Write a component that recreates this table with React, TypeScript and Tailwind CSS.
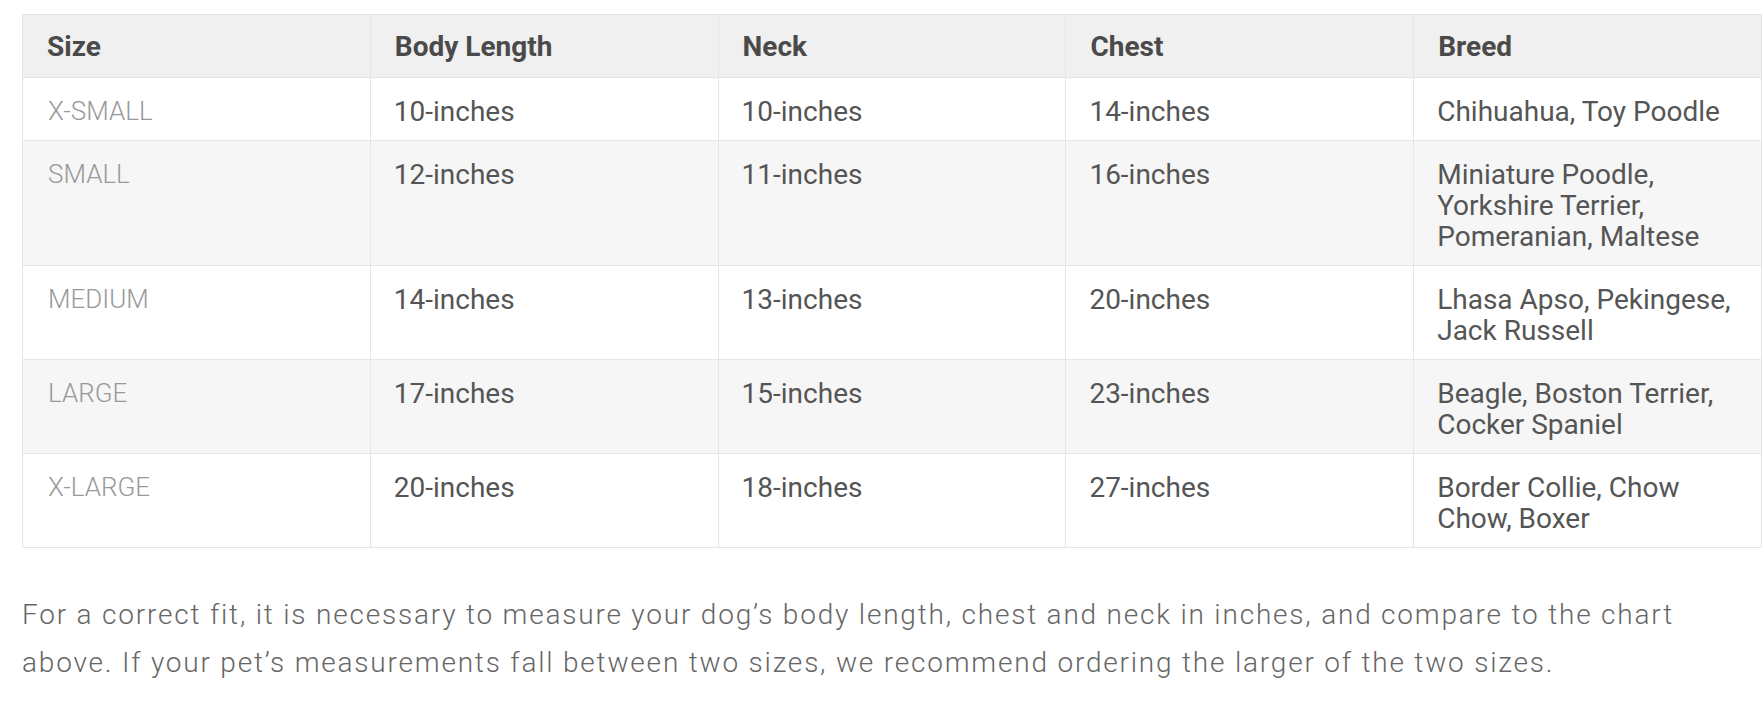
const rows = [
  { size: "X-SMALL", body: "10-inches", neck: "10-inches", chest: "14-inches", breed: "Chihuahua, Toy Poodle" },
  { size: "SMALL", body: "12-inches", neck: "11-inches", chest: "16-inches", breed: "Miniature Poodle, Yorkshire Terrier, Pomeranian, Maltese" },
  { size: "MEDIUM", body: "14-inches", neck: "13-inches", chest: "20-inches", breed: "Lhasa Apso, Pekingese, Jack Russell" },
  { size: "LARGE", body: "17-inches", neck: "15-inches", chest: "23-inches", breed: "Beagle, Boston Terrier, Cocker Spaniel" },
  { size: "X-LARGE", body: "20-inches", neck: "18-inches", chest: "27-inches", breed: "Border Collie, Chow Chow, Boxer" },
];

const headers = ["Size", "Body Length", "Neck", "Chest", "Breed"];

export default function App() {
  return (
    <div className="min-h-screen bg-white pl-[22px] pt-[14px] font-['Roboto',_'Liberation_Sans',_sans-serif]">
      <table className="w-[1740px] table-fixed border-collapse border border-[#e6e6e6]">
        <thead>
          <tr className="bg-[#f0f0f0]">
            {headers.map((h) => (
              <th
                key={h}
                className="w-1/5 border border-[#e6e6e6] px-[24px] pt-[17px] pb-[15px] text-left align-top text-[28px] font-bold leading-[30px] text-[#4a4a4a]"
              >
                {h}
              </th>
            ))}
          </tr>
        </thead>
        <tbody>
          {rows.map((r, i) => (
            <tr key={r.size} className={i % 2 === 1 ? "bg-[#f6f6f6]" : "bg-white"}>
              <td className="border border-[#e6e6e6] px-[25px] pt-[18px] pb-[13px] align-top text-[26px] font-light leading-[31px] text-[#999999]">
                {r.size}
              </td>
              <td className="border border-[#e6e6e6] px-[23px] pt-[18px] pb-[13px] align-top text-[28px] leading-[31px] text-[#555555]">
                {r.body}
              </td>
              <td className="border border-[#e6e6e6] px-[23px] pt-[18px] pb-[13px] align-top text-[28px] leading-[31px] text-[#555555]">
                {r.neck}
              </td>
              <td className="border border-[#e6e6e6] px-[23px] pt-[18px] pb-[13px] align-top text-[28px] leading-[31px] text-[#555555]">
                {r.chest}
              </td>
              <td className="border border-[#e6e6e6] px-[23px] pt-[18px] pb-[13px] align-top text-[28px] leading-[31px] text-[#555555]">
                {r.breed}
              </td>
            </tr>
          ))}
        </tbody>
      </table>
      <p className="mt-[43px] w-[1700px] text-[28px] font-light leading-[48px] tracking-[1.8px] text-[#666666]">
        For a correct fit, it is necessary to measure your dog’s body length, chest and neck in inches, and compare to the chart above. If your pet’s measurements fall between two sizes, we recommend ordering the larger of the two sizes.
      </p>
    </div>
  );
}
